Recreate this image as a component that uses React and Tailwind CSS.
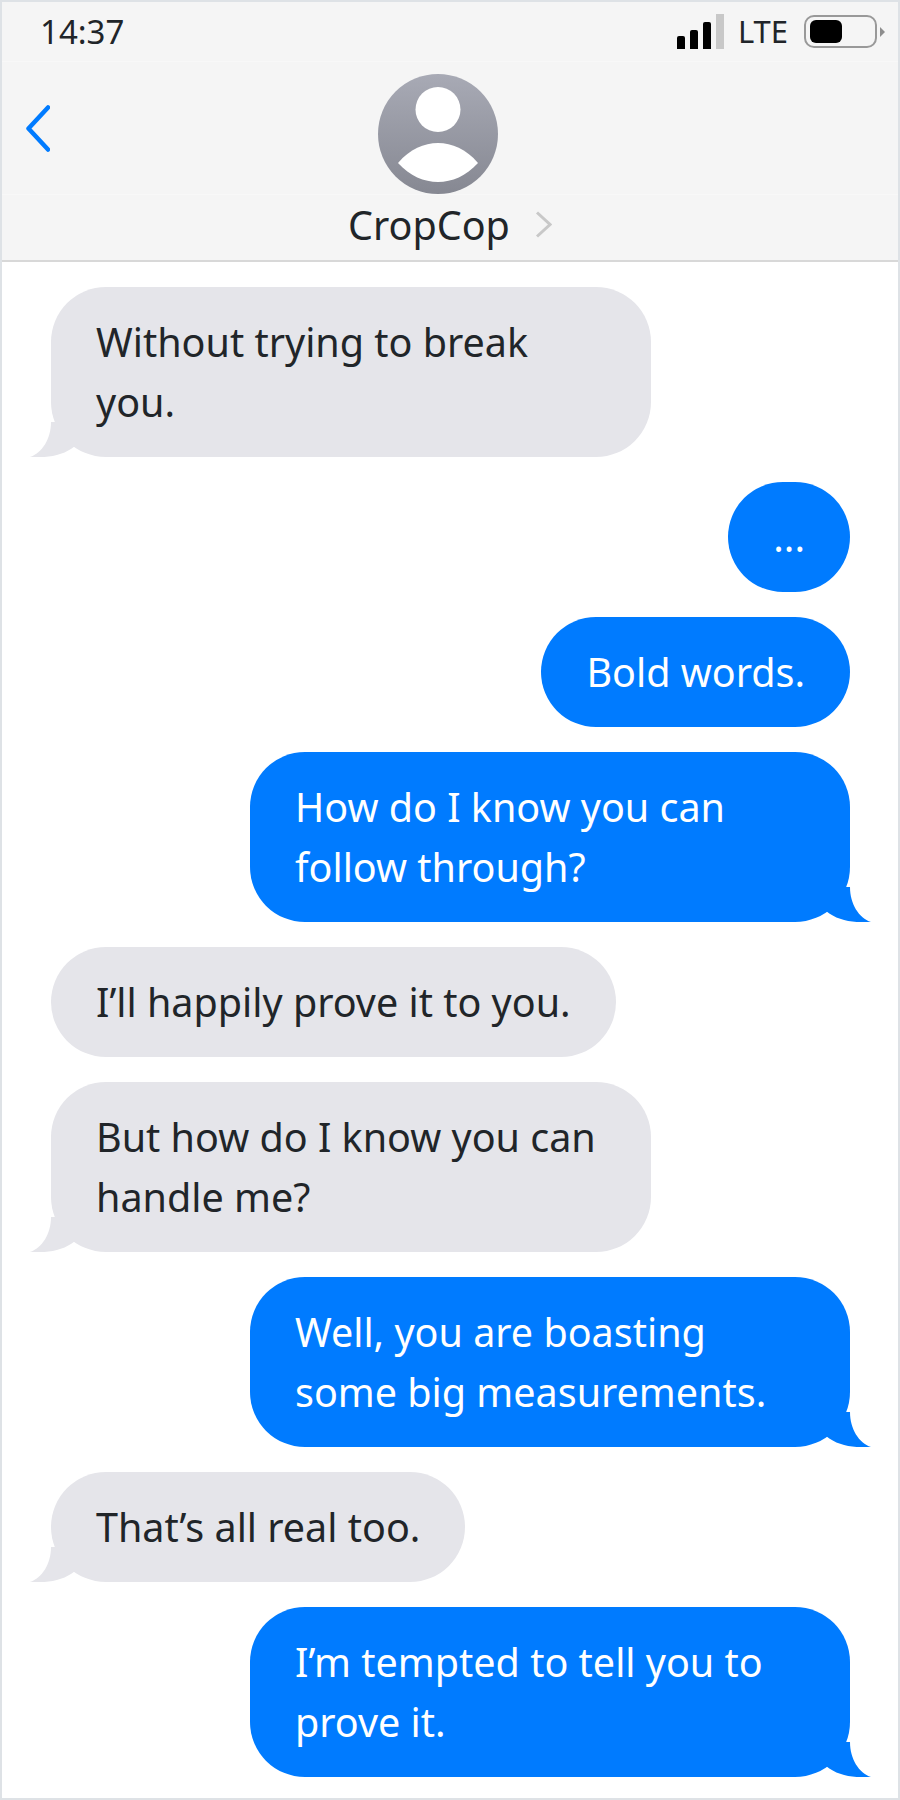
import React from "react";

const messages = [
  { from: "them", tail: true, text: "Without trying to break you." },
  { from: "me", text: "..." },
  { from: "me", text: "Bold words." },
  { from: "me", tail: true, text: "How do I know you can follow through?" },
  { from: "them", text: "I’ll happily prove it to you." },
  { from: "them", tail: true, text: "But how do I know you can handle me?" },
  { from: "me", tail: true, text: "Well, you are boasting some big measurements." },
  { from: "them", tail: true, text: "That’s all real too." },
  { from: "me", tail: true, text: "I’m tempted to tell you to prove it." },
];

function Tail({ mine }) {
  return (
    <svg
      viewBox="0 0 60 40"
      className={
        mine
          ? "absolute bottom-0 right-[-24px] h-[40px] w-[60px] -scale-x-100"
          : "absolute bottom-0 left-[-24px] h-[40px] w-[60px]"
      }
    >
      <path
        d="M24 5 C24 22 15 36 3 40 C20 41 36 39 48 29 L48 5 Z"
        fill={mine ? "#007bff" : "#e5e5ea"}
      />
    </svg>
  );
}

function Bubble({ msg }) {
  const mine = msg.from === "me";
  return (
    <div className={mine ? "flex justify-end" : "flex justify-start"}>
      <div
        className={
          mine
            ? "relative max-w-[600px] rounded-[55px] bg-[#007bff] px-[45px] py-[25px] text-[39.5px] leading-[60px] text-white"
            : "relative max-w-[600px] rounded-[55px] bg-[#e5e5ea] px-[45px] py-[25px] text-[39.5px] leading-[60px] text-[#212529]"
        }
      >
        {msg.text}
        {msg.tail && <Tail mine={mine} />}
      </div>
    </div>
  );
}

function StatusBar() {
  return (
    <div className="flex h-[60px] items-center justify-between border-b border-[#f8f8f8] pl-[38px] pr-[13px] text-[#212529]">
      <span className="text-[33px] leading-none">14:37</span>
      <div className="flex items-center">
        <div className="flex items-end gap-[5px]">
          <div className="h-[13px] w-[8px] rounded-t-[2px] bg-black" />
          <div className="h-[19px] w-[8px] rounded-t-[2px] bg-black" />
          <div className="h-[27px] w-[8px] rounded-t-[2px] bg-black" />
          <div className="h-[35px] w-[8px] bg-[#c8c8c8]" />
        </div>
        <span className="ml-[14px] text-[31px] leading-none">LTE</span>
        <div className="ml-[16px] flex h-[33px] w-[73px] items-center rounded-[10px] border-[2px] border-[#999999] pl-[4px]">
          <div className="h-[23px] w-[32px] rounded-[6px] bg-black" />
        </div>
        <svg viewBox="0 0 5 10" className="ml-[3px] h-[10px] w-[5px]">
          <path d="M0 0 L5 5 L0 10 Z" fill="#8e8e8e" />
        </svg>
      </div>
    </div>
  );
}

function Avatar() {
  return (
    <svg viewBox="0 0 120 120" className="mr-[24px] h-[120px] w-[120px]">
      <defs>
        <linearGradient id="avatar" x1="0" y1="0" x2="0" y2="1">
          <stop offset="0" stopColor="#a8aab5" />
          <stop offset="1" stopColor="#868892" />
        </linearGradient>
      </defs>
      <circle cx="60" cy="60" r="60" fill="url(#avatar)" />
      <circle cx="60" cy="35.5" r="22.5" fill="#fff" />
      <path
        d="M20 89 C32 75 46 69 60 69 C74 69 88 75 100 89 C88 102 74 108 60 108 C46 108 32 102 20 89 Z"
        fill="#fff"
      />
    </svg>
  );
}

export default function App() {
  return (
    <div
      className="h-[1800px] w-[900px] overflow-hidden border-[2px] border-[#dee2e6] bg-white"
      style={{ fontFamily: '"Noto Sans", sans-serif' }}
    >
      <header className="h-[260px] border-b-[2px] border-[#d8d8d8] bg-[#f5f5f5]">
        <StatusBar />
        <div className="relative flex flex-col items-center pt-[12px]">
          {/* Back chevron sits over the nav row */}
          <svg
            viewBox="0 0 24 47"
            className="absolute left-[24px] top-[43px] h-[47px] w-[24px]"
            fill="none"
            stroke="#007bff"
            strokeWidth="4.5"
            strokeLinecap="round"
            strokeLinejoin="round"
          >
            <path d="M22 2.5 L2.5 23.5 L22 44.5" />
          </svg>
          <Avatar />
          <div className="flex h-[60px] w-full items-center justify-center gap-[25px] border-t border-[#f8f8f8] text-[#212529]">
            <span className="text-[39.5px] leading-[50px]">CropCop</span>
            <svg
              viewBox="0 0 17 27"
              className="h-[27px] w-[17px]"
              fill="none"
              stroke="#c8c8c8"
              strokeWidth="3"
            >
              <path d="M2 1.5 L15 13.5 L2 25.5" />
            </svg>
          </div>
        </div>
      </header>
      <main className="flex flex-col gap-[25px] pl-[49px] pr-[48px] pt-[25px]">
        {messages.map((m, i) => (
          <Bubble key={i} msg={m} />
        ))}
      </main>
    </div>
  );
}
